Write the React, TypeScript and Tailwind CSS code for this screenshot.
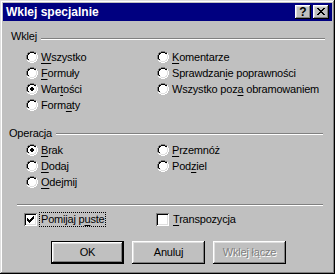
import React from "react";

const COLORS: Record<string, string> = {
  G: "#808080",
  K: "#000000",
  W: "#ffffff",
  D: "#dfdfdf",
  w: "#ffffff",
};

const RADIO = [
  "....GGGG....",
  "..GGKKKKGG..",
  ".GKKwwwwKKW.",
  ".GKwwwwwwDW.",
  "GKwwwwwwwwDW",
  "GKwwwwwwwwDW",
  "GKwwwwwwwwDW",
  "GKwwwwwwwwDW",
  ".GKwwwwwwDW.",
  ".WDDwwwwDDW.",
  "..WWDDDDWW..",
  "....WWWW....",
];

const DOT = [".KK.", "KKKK", "KKKK", ".KK."];

const CHECK = [
  "......K",
  ".....KK",
  "K...KKK",
  "KK.KKK.",
  "KKKKK..",
  ".KKK...",
  "..K....",
];

const XMARK = [
  "KK....KK",
  ".KK..KK.",
  "..KKKK..",
  "...KK...",
  "..KKKK..",
  ".KK..KK.",
  "KK....KK",
];

function Pixels({ map, className }: { map: string[]; className?: string }) {
  const h = map.length;
  const w = map[0].length;
  const rects: React.ReactNode[] = [];
  map.forEach((row, y) =>
    row.split("").forEach((ch, x) => {
      const c = COLORS[ch];
      if (c) rects.push(<rect key={`${x}-${y}`} x={x} y={y} width={1} height={1} fill={c} />);
    })
  );
  return (
    <svg width={w} height={h} viewBox={`0 0 ${w} ${h}`} shapeRendering="crispEdges" className={className}>
      {rects}
    </svg>
  );
}

function radioMap(checked: boolean) {
  if (!checked) return RADIO;
  return RADIO.map((row, y) =>
    row
      .split("")
      .map((ch, x) => {
        if (y >= 4 && y <= 7 && x >= 4 && x <= 7) {
          const d = DOT[y - 4][x - 4];
          return d === "K" ? "K" : ch;
        }
        return ch;
      })
      .join("")
  );
}

function Label({ text, u }: { text: string; u: number }) {
  return (
    <span className="whitespace-nowrap">
      {text.slice(0, u)}
      <span className="underline underline-offset-[2px]">{text[u]}</span>
      {text.slice(u + 1)}
    </span>
  );
}

function Radio({ text, u, checked = false }: { text: string; u: number; checked?: boolean }) {
  return (
    <div className="h-[16px] flex items-center">
      <Pixels map={radioMap(checked)} className="shrink-0" />
      <span className="ml-[3px]">
        <Label text={text} u={u} />
      </span>
    </div>
  );
}

function CheckBox({ checked }: { checked: boolean }) {
  return (
    <div className="w-[13px] h-[13px] shrink-0 bg-white shadow-[inset_1px_1px_#808080,inset_-1px_-1px_#ffffff,inset_2px_2px_#000000,inset_-2px_-2px_#dfdfdf] flex items-start justify-start">
      {checked && <Pixels map={CHECK} className="mt-[3px] ml-[3px]" />}
    </div>
  );
}

function GroupHeader({ title, className, lineClass }: { title: string; className: string; lineClass: string }) {
  return (
    <div className={`flex items-start ${className}`}>
      <span>{title}</span>
      <div className={`flex-1 ml-[4px] h-[2px] border-t border-b border-t-[#808080] border-b-white ${lineClass}`} />
    </div>
  );
}

const RAISED =
  "shadow-[inset_-1px_-1px_#000000,inset_1px_1px_#ffffff,inset_-2px_-2px_#808080,inset_2px_2px_#dfdfdf]";

export default function App() {
  return (
    <div className="w-[335px] h-[274px] bg-[#c0c0c0] p-[3px] flex flex-col shadow-[inset_-1px_-1px_#000000,inset_1px_1px_#dfdfdf,inset_-2px_-2px_#808080,inset_2px_2px_#ffffff] font-['Liberation_Sans',Arial,sans-serif] text-[11px] leading-[13px] tracking-[-0.2px] text-black">
      {/* Title bar */}
      <div className="h-[18px] shrink-0 bg-[#000080] flex items-center pl-[3px] pr-[3px]">
        <span className="text-white font-bold text-[12px] tracking-normal">Wklej specjalnie</span>
        <div className="ml-auto flex gap-[2px]">
          <div className={`w-[16px] h-[14px] bg-[#c0c0c0] ${RAISED} flex items-center justify-center`}>
            <span className="font-bold text-[12px] leading-none tracking-normal -mt-[1px]">?</span>
          </div>
          <div className={`w-[16px] h-[14px] bg-[#c0c0c0] ${RAISED} flex items-start justify-start`}>
            <Pixels map={XMARK} className="mt-[3px] ml-[4px]" />
          </div>
        </div>
      </div>

      {/* Wklej group */}
      <GroupHeader title="Wklej" className="mt-[9px] pl-[8px] pr-[7px]" lineClass="mt-[8px]" />
      <div className="mt-[6px] pl-[23px] grid grid-cols-[131px_1fr]">
        <Radio text="Wszystko" u={0} />
        <Radio text="Komentarze" u={0} />
        <Radio text="Formuły" u={0} />
        <Radio text="Sprawdzanie poprawności" u={9} />
        <Radio text="Wartości" u={3} checked />
        <Radio text="Wszystko poza obramowaniem" u={12} />
        <Radio text="Formaty" u={4} />
        <div />
      </div>

      {/* Operacja group */}
      <GroupHeader title="Operacja" className="mt-[14px] pl-[6px] pr-[9px]" lineClass="mt-[6px]" />
      <div className="mt-[2px] pl-[23px] grid grid-cols-[131px_1fr]">
        <Radio text="Brak" u={0} checked />
        <Radio text="Przemnóż" u={0} />
        <Radio text="Dodaj" u={0} />
        <Radio text="Podziel" u={3} />
        <Radio text="Odejmij" u={0} />
        <div />
      </div>

      {/* Separator */}
      <div className="mt-[14px] ml-[14px] mr-[9px] h-[2px] border-t border-b border-t-[#808080] border-b-white" />

      {/* Checkboxes */}
      <div className="mt-[6px] h-[15px] pl-[21px] flex items-center">
        <div className="w-[132px] flex items-center">
          <CheckBox checked />
          <span className="ml-[2px] h-[15px] pl-[1px] pr-[1px] border border-dotted border-black flex items-center">
            <Label text="Pomijaj puste" u={9} />
          </span>
        </div>
        <div className="flex items-center">
          <CheckBox checked={false} />
          <span className="ml-[4px]">
            <Label text="Transpozycja" u={0} />
          </span>
        </div>
      </div>

      {/* Buttons */}
      <div className="mt-[14px] pl-[48px] flex gap-[8px]">
        <div className="w-[73px] h-[23px] border border-black">
          <div className={`w-full h-full ${RAISED} flex items-center justify-center`}>OK</div>
        </div>
        <div className={`w-[73px] h-[23px] ${RAISED} flex items-center justify-center`}>
          <Label text="Anuluj" u={99} />
        </div>
        <div className={`w-[73px] h-[23px] ${RAISED} flex items-center justify-center text-[#808080] [text-shadow:1px_1px_0_#ffffff]`}>
          Wklej łącze
        </div>
      </div>
    </div>
  );
}
